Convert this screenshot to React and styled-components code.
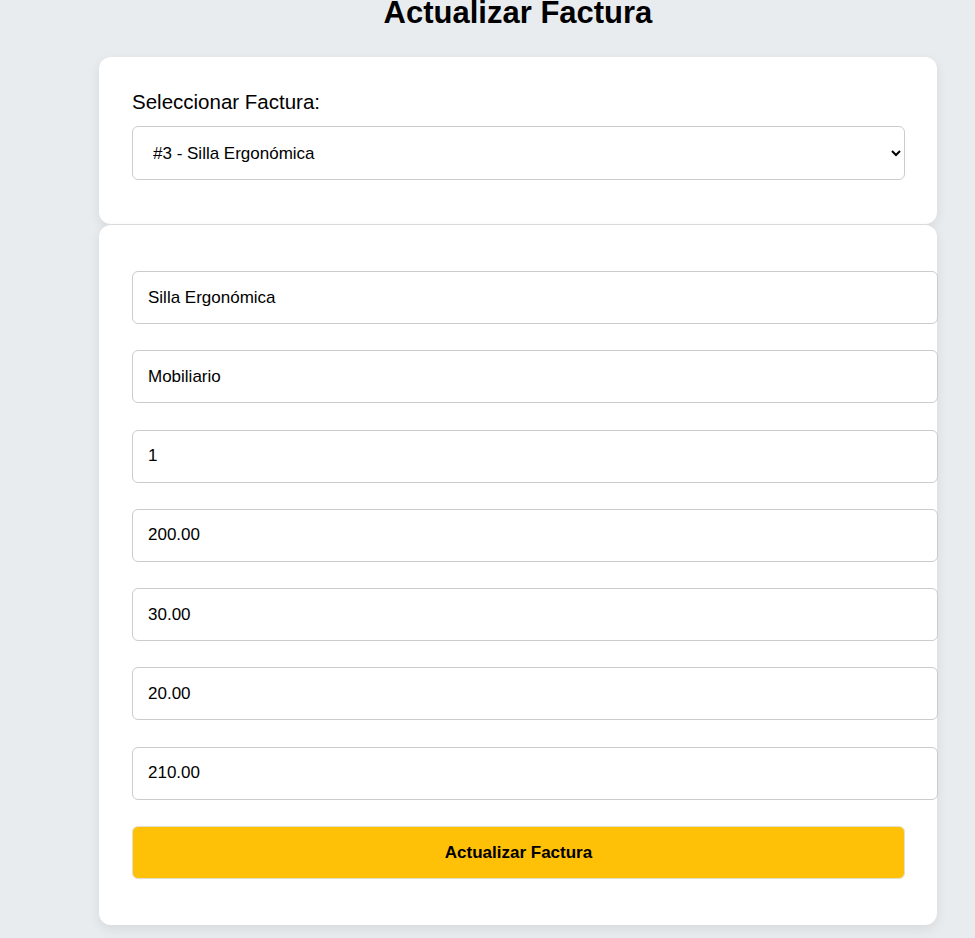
import React, { useState } from "react";
import styled, { createGlobalStyle } from "styled-components";

const GlobalStyle = createGlobalStyle`
  body {
    margin: 0;
    background: #e9ecef;
    font-family: "Liberation Sans", Arial, sans-serif;
    color: #000;
  }
`;

const facturas = [
  { id: 1, producto: "Laptop Dell", categoria: "Electrónica" },
  { id: 2, producto: "Monitor LG", categoria: "Electrónica" },
  { id: 3, producto: "Silla Ergonómica", categoria: "Mobiliario" },
];

function App() {
  const [selected, setSelected] = useState("3");
  const [form, setForm] = useState({
    producto: "Silla Ergonómica",
    categoria: "Mobiliario",
    cantidad: "1",
    precio: "200.00",
    impuesto: "30.00",
    descuento: "20.00",
    total: "210.00",
  });

  const handleChange = (e) => {
    setForm({ ...form, [e.target.name]: e.target.value });
  };

  return (
    <Page>
      <GlobalStyle />
      <Container>
        <Title>Actualizar Factura</Title>
        <Card>
          <Label htmlFor="factura">Seleccionar Factura:</Label>
          <Select
            id="factura"
            value={selected}
            onChange={(e) => setSelected(e.target.value)}
          >
            {facturas.map((f) => (
              <option key={f.id} value={f.id}>
                #{f.id} - {f.producto}
              </option>
            ))}
          </Select>
        </Card>
        <Card>
          <Form onSubmit={(e) => e.preventDefault()}>
            {Object.keys(form).map((key) => (
              <Input
                key={key}
                name={key}
                value={form[key]}
                onChange={handleChange}
              />
            ))}
            <Button type="submit">Actualizar Factura</Button>
          </Form>
        </Card>
      </Container>
    </Page>
  );
}

const Page = styled.div`
  padding-left: 99px;
  padding-bottom: 13px;
`;

const Container = styled.div`
  width: 838px;
`;

const Title = styled.h1`
  margin: -5px 0 26px;
  text-align: center;
  font-size: 31px;
  font-weight: 700;
  line-height: 36px;
`;

const Card = styled.div`
  background: #fff;
  border-radius: 12px;
  padding: 33px 32px 33px 33px;
  box-shadow: 0 4px 12px rgba(0, 0, 0, 0.08);
  margin-bottom: 1px;

  &:first-of-type {
    padding-bottom: 44px;
  }
`;

const Label = styled.label`
  display: block;
  font-size: 20.5px;
  line-height: 24px;
  margin-bottom: 12px;
`;

const Select = styled.select`
  display: block;
  width: 100%;
  height: 54px;
  padding: 0 12px 0 16px;
  font-family: "Liberation Sans", Arial, sans-serif;
  font-size: 17px;
  color: #000;
  background: #fff;
  border: 1px solid #ccc;
  border-radius: 6px;
  outline: none;
`;

const Form = styled.form`
  display: flex;
  flex-direction: column;
  gap: 26.3px;
  padding: 13px 0;
`;

const Input = styled.input`
  box-sizing: content-box;
  width: 100%;
  height: 51px;
  padding: 0 16px 0 15px;
  font-family: "Liberation Sans", Arial, sans-serif;
  font-size: 17px;
  color: #000;
  background: #fff;
  border: 1px solid #ccc;
  border-radius: 6px;
  outline: none;
`;

const Button = styled.button`
  width: 100%;
  height: 53px;
  background: #ffc107;
  border: 1px solid #e6dfc8;
  border-radius: 6px;
  font-family: "Liberation Sans", Arial, sans-serif;
  font-size: 17px;
  font-weight: 700;
  color: #000;
  cursor: pointer;
`;

export default App;
